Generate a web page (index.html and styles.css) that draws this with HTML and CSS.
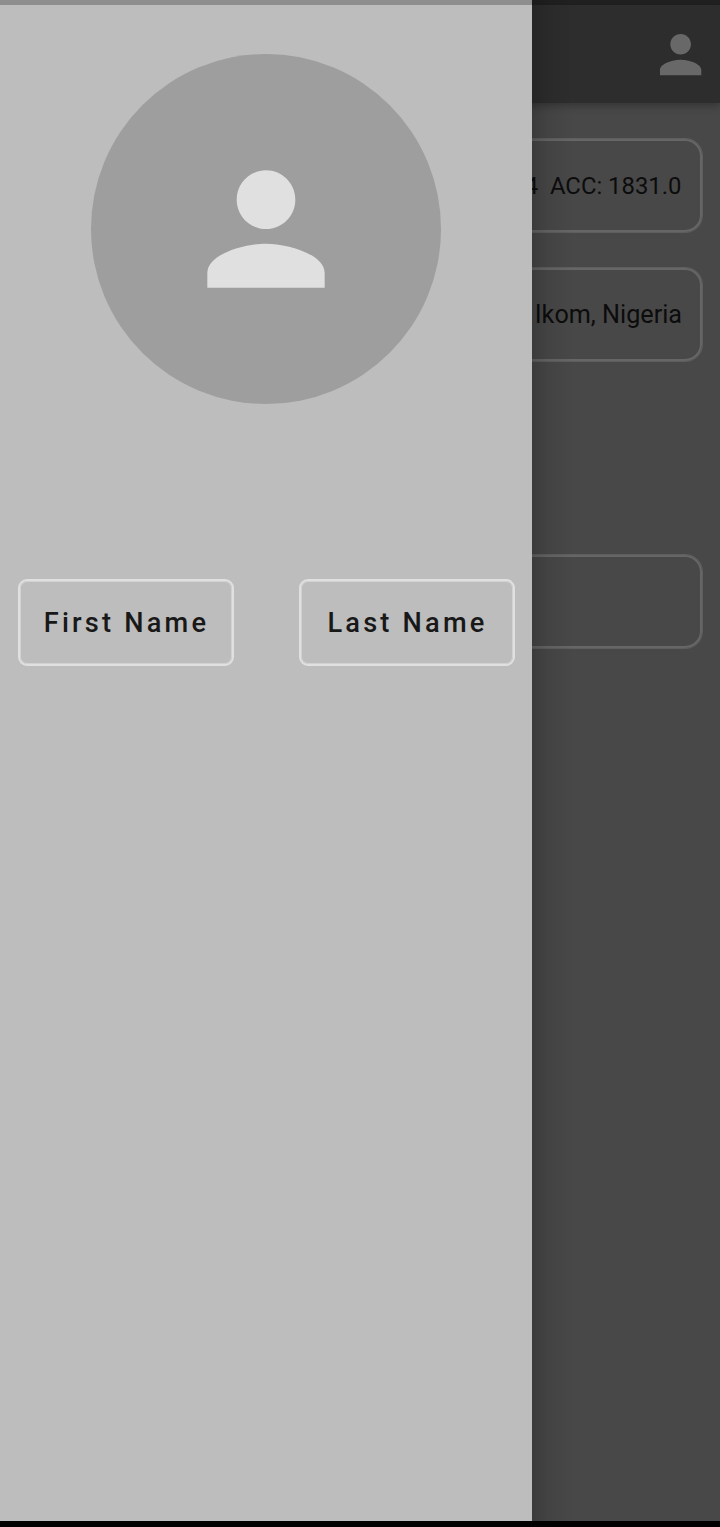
FILE: index.html
```
<!DOCTYPE html>
<html lang="en">
<head>
<meta charset="utf-8">
<title>Profile drawer</title>
<link rel="stylesheet" href="styles.css">
</head>
<body>
<div class="app">
  <main class="screen">
    <div class="status"></div>
    <header class="appbar">
      <svg class="account" viewBox="-0.25 0.15 24 24"><path d="M12 12c2.21 0 4-1.79 4-4s-1.790-4-4-4-4 1.790-4 4 1.790 4 4 4zm0 2c-2.670 0-8 1.340-8 4v2h16v-2c0-2.660-5.330-4-8-4z"/></svg>
    </header>
    <section class="fields">
      <div class="field coords"><span>4&nbsp; ACC: 1831.0</span></div>
      <div class="field place"><span>Ikom, Nigeria</span></div>
      <div class="field empty"></div>
    </section>
    <div class="navbar"></div>
  </main>
  <aside class="drawer">
    <div class="drawer-status"></div>
    <div class="avatar">
      <svg viewBox="0 0 24 24"><path d="M12 12c2.21 0 4-1.79 4-4s-1.790-4-4-4-4 1.790-4 4 1.790 4 4 4zm0 2c-2.670 0-8 1.340-8 4v2h16v-2c0-2.660-5.330-4-8-4z"/></svg>
    </div>
    <div class="names">
      <button class="name">First Name</button>
      <button class="name">Last Name</button>
    </div>
  </aside>
</div>
</body>
</html>
```
FILE: styles.css
```
* { box-sizing: border-box; }
body { margin: 0; font-family: Roboto, sans-serif; background: #000; }
.app { position: relative; width: 720px; height: 1527px; overflow: hidden; }
.screen { display: flex; flex-direction: column; height: 100%; background: #484848; }
.status { height: 5px; background: #212121; flex: none; }
.appbar {
  height: 98px;
  flex: none;
  display: flex;
  justify-content: flex-end;
  padding: 19px 9px 0 0;
  background: #2d2d2d;
  box-shadow: 0 3px 8px rgba(0, 0, 0, .28);
}
.account { width: 62px; height: 62px; fill: #686868; }
.fields { flex: 1; padding: 36px 18px 0; }
.field {
  display: flex;
  align-items: center;
  justify-content: flex-end;
  height: 93px;
  padding: 0 18.6px;
  border: 2px solid #666;
  border-radius: 17px;
  box-shadow: 0 0 0 1px rgba(102, 102, 102, .75);
  color: #0c0c0c;
  white-space: pre;
}
.coords { font-size: 23.85px; }
.place { margin-top: 36px; padding-right: 18px; font-size: 25.2px; }
.empty { margin-top: 194px; }
.navbar { height: 6px; flex: none; background: #000; }
.drawer {
  position: absolute;
  left: 0;
  top: 0;
  width: 532px;
  height: 1521px;
  background: #bdbdbd;
}
/* Shadow cast on the screen behind, even along the whole edge */
.drawer::after {
  content: "";
  position: absolute;
  left: 100%;
  top: 0;
  bottom: 0;
  width: 42px;
  background: linear-gradient(90deg, rgba(0, 0, 0, .18), rgba(0, 0, 0, .07) 40%, transparent);
}
.drawer-status { height: 5px; background: #8e8e8e; }
.avatar {
  display: flex;
  align-items: center;
  justify-content: center;
  width: 350px;
  height: 350px;
  margin: 49px auto 0;
  border-radius: 50%;
  background: #9e9e9e;
}
.avatar svg { width: 176px; height: 176px; fill: #e0e0e0; }
.names { display: flex; justify-content: space-between; margin-top: 175px; padding: 0 17.5px; }
.name {
  width: 216px;
  height: 87px;
  padding: 1px 0 0 2px;
  border: 2px solid #e0e0e0;
  border-radius: 9px;
  box-shadow: inset 0 0 0 1px rgba(224, 224, 224, .6);
  background: none;
  font: 500 27.2px Roboto, sans-serif;
  letter-spacing: 3.2px;
  color: #181818;
  white-space: nowrap;
}
```
